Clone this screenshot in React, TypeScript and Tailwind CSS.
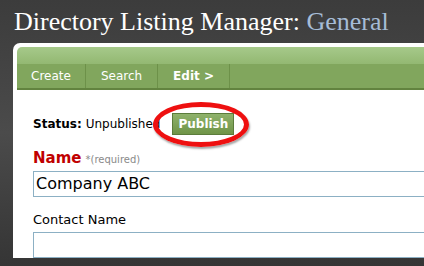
export default function App() {
  return (
    <div className="relative h-[266px] w-[424px] overflow-hidden bg-gradient-to-b from-[#3c3c3c] via-[#4b4b4b] to-[#353535]">
      <h1 className="pl-[14px] pt-[5px] font-['Liberation_Serif',serif] text-[26px] leading-[34px] text-white">
        Directory Listing Manager: <span className="text-[#a6bcd6]">General</span>
      </h1>
      <div className="ml-[13px] mt-[4px] w-[440px] rounded-tl-[7px] bg-white pl-[4px] pt-[4px] font-['DejaVu_Sans',sans-serif]">
        <div className="overflow-hidden rounded-tl-[5px] border-b-2 border-[#62833f]">
          <div className="h-[17px] bg-gradient-to-b from-[#a6c98a] to-[#93b872]" />
          <nav className="flex h-[24px] bg-[#81a65d] text-[12px] text-white">
            <span className="flex items-center border-r border-[#6d9149] px-[14px]">Create</span>
            <span className="flex items-center border-r border-[#6d9149] px-[15px]">Search</span>
            <span className="flex items-center border-r border-[#6d9149] px-[15px] font-bold">Edit &gt;</span>
          </nav>
        </div>
        <div className="px-[16px] pt-[23px]">
          <div className="flex items-center gap-[4px] text-[12px] text-black">
            <span className="font-bold">Status:</span>
            <span>Unpublished</span>
            <span className="relative ml-[8px]">
              <span className="flex h-[22px] items-center border border-[#5b7c3b] bg-gradient-to-b from-[#8fb26b] to-[#6f9448] px-[5px] text-[12px] font-bold text-white">
                Publish
              </span>
              <span className="absolute left-[-19px] top-[-11px] h-[45px] w-[96px] rounded-[50%] border-[5px] border-[#ee1010] shadow-[1px_2px_2px_rgba(0,0,0,0.35)]" />
            </span>
          </div>
          <div className="mt-[12px] flex items-baseline gap-[4px]">
            <span className="text-[15px] font-bold text-[#c00000]">Name</span>
            <span className="text-[10px] text-[#8a8a8a]">*(required)</span>
          </div>
          <div className="mt-[1px] flex h-[26px] items-center border border-[#8cb0c4] px-[2px] text-[16px] text-black">
            Company ABC
          </div>
          <div className="mt-[13px] text-[13px] text-black">Contact Name</div>
          <div className="mt-[3px] h-[26px] border border-[#8cb0c4]" />
        </div>
      </div>
    </div>
  );
}
